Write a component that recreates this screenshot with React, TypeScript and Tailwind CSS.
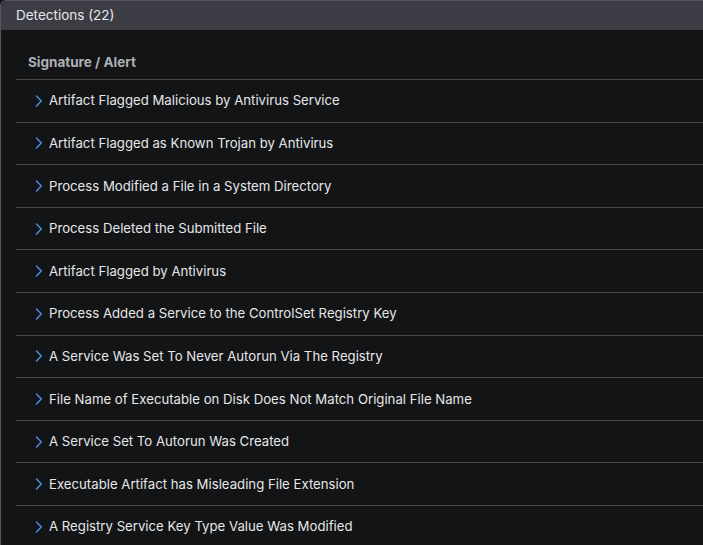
import React from "react";

const rows = [
  "Artifact Flagged Malicious by Antivirus Service",
  "Artifact Flagged as Known Trojan by Antivirus",
  "Process Modified a File in a System Directory",
  "Process Deleted the Submitted File",
  "Artifact Flagged by Antivirus",
  "Process Added a Service to the ControlSet Registry Key",
  "A Service Was Set To Never Autorun Via The Registry",
  "File Name of Executable on Disk Does Not Match Original File Name",
  "A Service Set To Autorun Was Created",
  "Executable Artifact has Misleading File Extension",
  "A Registry Service Key Type Value Was Modified",
];

function Chevron() {
  return (
    <svg width="8" height="12" viewBox="0 0 8 12" fill="none" className="shrink-0">
      <path d="M1.5 1 L6.3 6 L1.5 11" stroke="#4b8ee6" strokeWidth="1.5" strokeLinecap="round" strokeLinejoin="round" />
    </svg>
  );
}

export default function App() {
  return (
    <div
      className="w-[703px] h-[545px] overflow-hidden bg-[#131416]"
      style={{ fontFamily: "Inter, 'Noto Sans', sans-serif" }}
    >
      <div className="h-[560px] border-l border-t border-[#55565c] rounded-tl-[6px] overflow-hidden">
        <div className="h-[29px] bg-[#3c3d44] flex items-center pl-[15px] text-[13.5px] text-[#e8e8ea]">
          Detections (22)
        </div>
        <div className="pl-[15px]">
          <div className="pt-[25px] pb-[9px] pl-[12px] text-[13.5px] leading-[15px] font-bold text-[#aeb0b5] border-b border-[#46474b]">
            Signature / Alert
          </div>
          {rows.map((r) => (
            <div
              key={r}
              className="h-[42.6px] flex items-center border-b border-[#46474b] pl-[19px] gap-[6px] text-[13.2px] text-[#e6e7e9] whitespace-nowrap"
            >
              <Chevron />
              <span className="pt-[1px]">{r}</span>
            </div>
          ))}
        </div>
      </div>
    </div>
  );
}
